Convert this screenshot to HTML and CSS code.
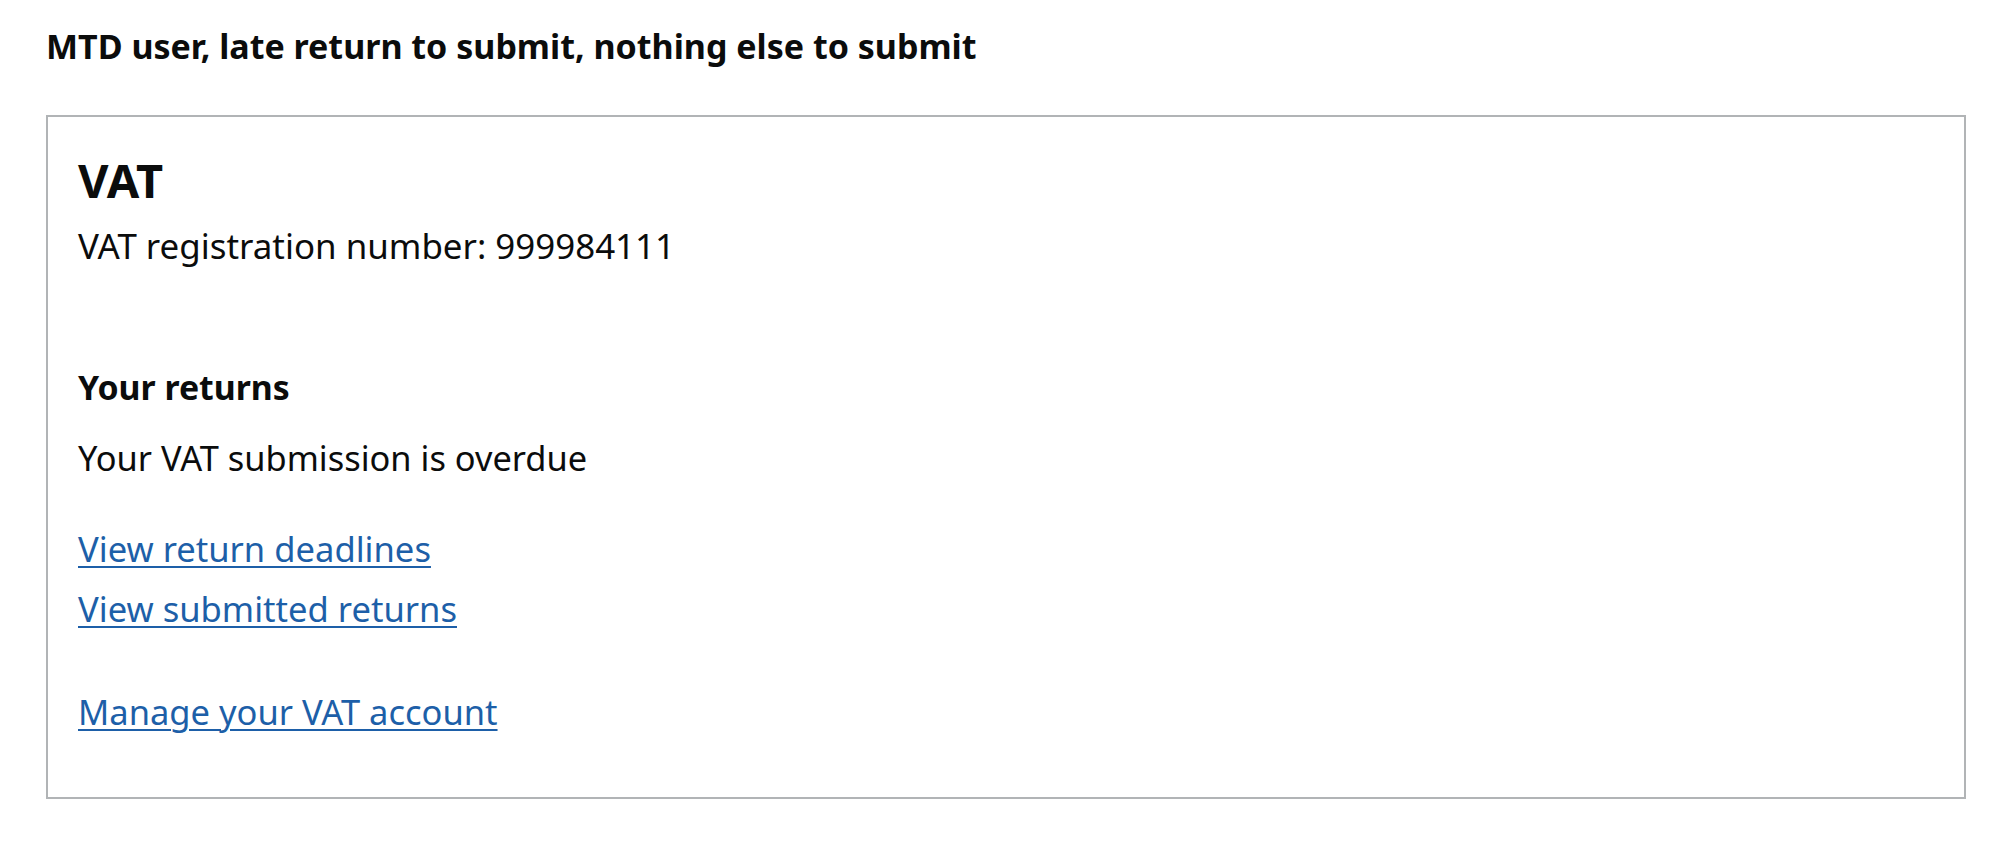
FILE: index.html
```html
<!DOCTYPE html>
<html lang="en">
<head>
<meta charset="utf-8">
<title>VAT card</title>
<link rel="stylesheet" href="styles.css">
</head>
<body>
<main class="page">
  <h2 class="scenario">MTD user, late return to submit, nothing else to submit</h2>
  <section class="card">
    <h3 class="card-title">VAT</h3>
    <p class="card-meta">VAT registration number: 999984111</p>
    <h4 class="section-title">Your returns</h4>
    <p class="status">Your VAT submission is overdue</p>
    <ul class="links">
      <li><a href="#" class="link">View return deadlines</a></li>
      <li><a href="#" class="link">View submitted returns</a></li>
    </ul>
    <p class="manage"><a href="#" class="link">Manage your VAT account</a></p>
  </section>
</main>
</body>
</html>
```
FILE: styles.css
```css
* { box-sizing: border-box; }
html, body { margin: 0; padding: 0; background: #ffffff; }
body {
  font-family: "Noto Sans", "Liberation Sans", Arial, sans-serif;
  color: #0b0c0c;
}
.page {
  padding: 25px 49px 0 46px;
}
.scenario {
  margin: 0 0 47px 0;
  font-size: 34px;
  line-height: 43px;
  font-weight: 700;
}
.card {
  border: 2px solid #b1b4b6;
  padding: 36px 30px 64px 30px;
}
.card-title {
  margin: 0;
  font-size: 47px;
  line-height: 55px;
  font-weight: 700;
}
.card-meta {
  margin: 16px 0 0;
  font-size: 34.9px;
  line-height: 43px;
}
.section-title {
  margin: 99px 0 0;
  font-size: 33.8px;
  line-height: 43px;
  font-weight: 700;
}
.status {
  margin: 27px 0 0;
  font-size: 34.4px;
  line-height: 43px;
}
.links {
  list-style: none;
  margin: 48px 0 0;
  padding: 0;
  display: flex;
  flex-direction: column;
  gap: 17px;
}
.links li {
  font-size: 34.6px;
  line-height: 43px;
}
.manage {
  margin: 60px 0 0;
  font-size: 34.5px;
  line-height: 43px;
}
.link {
  color: #1d5fa8;
  text-decoration: underline;
  text-decoration-thickness: 2px;
  text-underline-offset: 4px;
}
```
